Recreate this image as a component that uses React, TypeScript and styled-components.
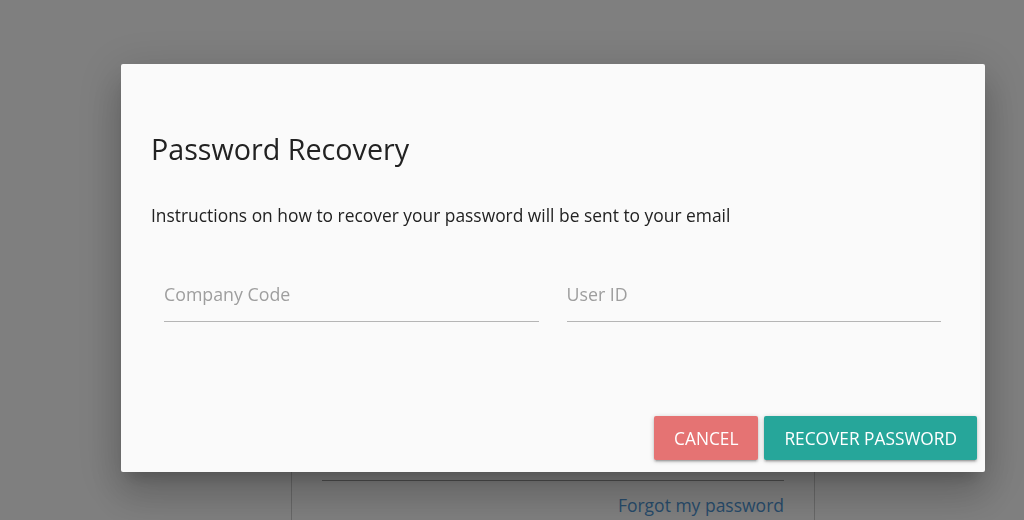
import * as React from 'react';
import styled, {createGlobalStyle} from "styled-components";

const GlobalStyle = createGlobalStyle`
	html, body {
		margin: 0;
		padding: 0;
		width: 1024px;
		height: 520px;
		overflow: hidden;
		background: #ffffff;
		font-family: "Open Sans", "Noto Sans", sans-serif;
	}
`;

const Page = styled.div`
	width: 1024px;
	height: 520px;
	display: flex;
	padding-left: 291px;
	box-sizing: border-box;
`;

const LoginCard = styled.div`
	width: 524px;
	margin-top: 330px;
	border-left: 1px solid #cfcfcf;
	border-right: 1px solid #cfcfcf;
	padding: 0 30px;
	box-sizing: border-box;
	display: flex;
	flex-direction: column;
`;

const CardField = styled.div`
	height: 150px;
	border-bottom: 1px solid #9e9e9e;
`;

const ForgotLink = styled.a`
	align-self: flex-end;
	margin-top: 12px;
	font-size: 17.5px;
	color: #4f97d6;
	text-decoration: none;
`;

const Overlay = styled.div`
	position: fixed;
	inset: 0;
	background: rgba(0, 0, 0, 0.5);
`;

const Modal = styled.div`
	position: fixed;
	left: 121px;
	top: 64px;
	width: 864px;
	height: 408px;
	background: #fafafa;
	border-radius: 2px;
	box-shadow: 0 24px 38px 3px rgba(0, 0, 0, 0.14), 0 9px 46px 8px rgba(0, 0, 0, 0.12), 0 11px 15px -7px rgba(0, 0, 0, 0.2);
	display: flex;
	flex-direction: column;
	box-sizing: border-box;
`;

const ModalContent = styled.div`
	padding: 66px 30px 0 30px;
	display: flex;
	flex-direction: column;
`;

const Title = styled.h4`
	margin: 0;
	font-size: 28.7px;
	line-height: 38px;
	font-weight: 400;
	color: #222;
`;

const Lead = styled.p`
	margin: 35px 0 0 0;
	font-size: 17.4px;
	line-height: 24px;
	color: #222;
`;

const FieldRow = styled.div`
	display: grid;
	grid-template-columns: 1fr 1fr;
	gap: 28px;
	margin: 47px 14px 0 13px;
`;

const TextInput = styled.input`
	height: 48px;
	padding: 0 0 8px 0;
	border: none;
	border-bottom: 1px solid #b5b5b5;
	background: transparent;
	font-family: inherit;
	font-size: 17.8px;
	color: #333;
	outline: none;
	box-sizing: border-box;
	width: 100%;

	&::placeholder {
		color: #9e9e9e;
	}
`;

const ModalFooter = styled.div`
	margin-top: auto;
	display: flex;
	justify-content: flex-end;
	gap: 6px;
	padding: 0 8px 12px 0;
`;

const Button = styled.button<{ $tone: string }>`
	height: 44px;
	padding: 0 20px;
	border: none;
	border-radius: 2px;
	background: ${p => p.$tone};
	color: #fff;
	font-family: inherit;
	font-size: 17.3px;
	text-transform: uppercase;
	box-shadow: 0 2px 2px 0 rgba(0, 0, 0, 0.14), 0 3px 1px -2px rgba(0, 0, 0, 0.12), 0 1px 5px 0 rgba(0, 0, 0, 0.2);
	cursor: pointer;
`;

export default function App() {
	return (
		<>
			<GlobalStyle/>
			<Page>
				<LoginCard>
					<CardField/>
					<ForgotLink href="#">Forgot my password</ForgotLink>
				</LoginCard>
			</Page>
			<Overlay/>
			<Modal>
				<ModalContent>
					<Title>Password Recovery</Title>
					<Lead>Instructions on how to recover your password will be sent to your email</Lead>
					<FieldRow>
						<TextInput placeholder="Company Code"/>
						<TextInput placeholder="User ID"/>
					</FieldRow>
				</ModalContent>
				<ModalFooter>
					<Button $tone="#e57373">Cancel</Button>
					<Button $tone="#26a69a">Recover Password</Button>
				</ModalFooter>
			</Modal>
		</>
	);
}
